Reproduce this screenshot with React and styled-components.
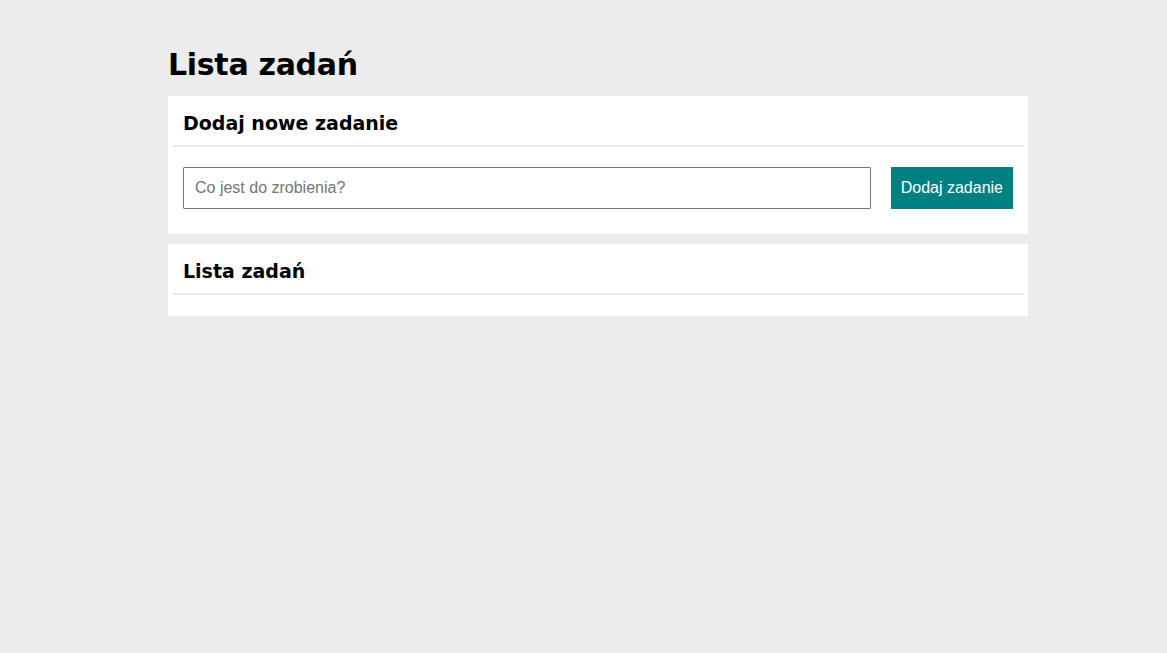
import React, { useState } from "react";
import styled, { createGlobalStyle } from "styled-components";

const GlobalStyle = createGlobalStyle`
  html, body {
    margin: 0;
    padding: 0;
    background: #ececec;
  }
  body {
    font-family: "Liberation Sans", Arial, sans-serif;
  }
`;

const Page = styled.main`
  width: 860px;
  margin-left: 168px;
  padding-top: 44px;
  display: flex;
  flex-direction: column;
  gap: 10px;
`;

const Title = styled.h1`
  margin: 0;
  font-family: "DejaVu Sans", sans-serif;
  font-weight: 700;
  font-size: 30px;
  letter-spacing: -0.3px;
  line-height: 42px;
  color: #000;
`;

const Card = styled.section`
  background: #fff;
  padding: 5px;
`;

const CardHeader = styled.h2`
  margin: 0;
  padding: 10px;
  font-family: "DejaVu Sans", sans-serif;
  font-weight: 700;
  font-size: 19px;
  line-height: 24px;
  color: #000;
  border-bottom: 2px solid #eaeaea;
`;

const CardBody = styled.div`
  padding: ${(p) => (p.$empty ? "8px 10px" : "20px 10px")};
  display: flex;
  gap: 20px;
`;

const Input = styled.input`
  flex: 1;
  height: 42px;
  box-sizing: border-box;
  border: 1px solid #767676;
  border-radius: 1px;
  padding: 0 11px;
  font-family: "Liberation Sans", Arial, sans-serif;
  font-size: 16px;
  color: #000;
  outline: none;
  &::placeholder {
    color: #757575;
  }
`;

const Button = styled.button`
  height: 42px;
  border: none;
  border-radius: 0;
  background: #008080;
  color: #fff;
  padding: 0 10px;
  font-family: "Liberation Sans", Arial, sans-serif;
  font-size: 16px;
  cursor: pointer;
`;

const TaskList = styled.ul`
  margin: 0;
  padding: 0;
  list-style: none;
`;

export default function App() {
  const [value, setValue] = useState("");
  const [tasks, setTasks] = useState([]);
  const add = () => {
    if (!value.trim()) return;
    setTasks([...tasks, value.trim()]);
    setValue("");
  };
  return (
    <>
      <GlobalStyle />
      <Page>
        <Title>Lista zadań</Title>
        <Card>
          <CardHeader>Dodaj nowe zadanie</CardHeader>
          <CardBody>
            <Input
              placeholder="Co jest do zrobienia?"
              value={value}
              onChange={(e) => setValue(e.target.value)}
            />
            <Button onClick={add}>Dodaj zadanie</Button>
          </CardBody>
        </Card>
        <Card>
          <CardHeader>Lista zadań</CardHeader>
          <CardBody $empty>
            <TaskList>
              {tasks.map((t, i) => (
                <li key={i}>{t}</li>
              ))}
            </TaskList>
          </CardBody>
        </Card>
      </Page>
    </>
  );
}
